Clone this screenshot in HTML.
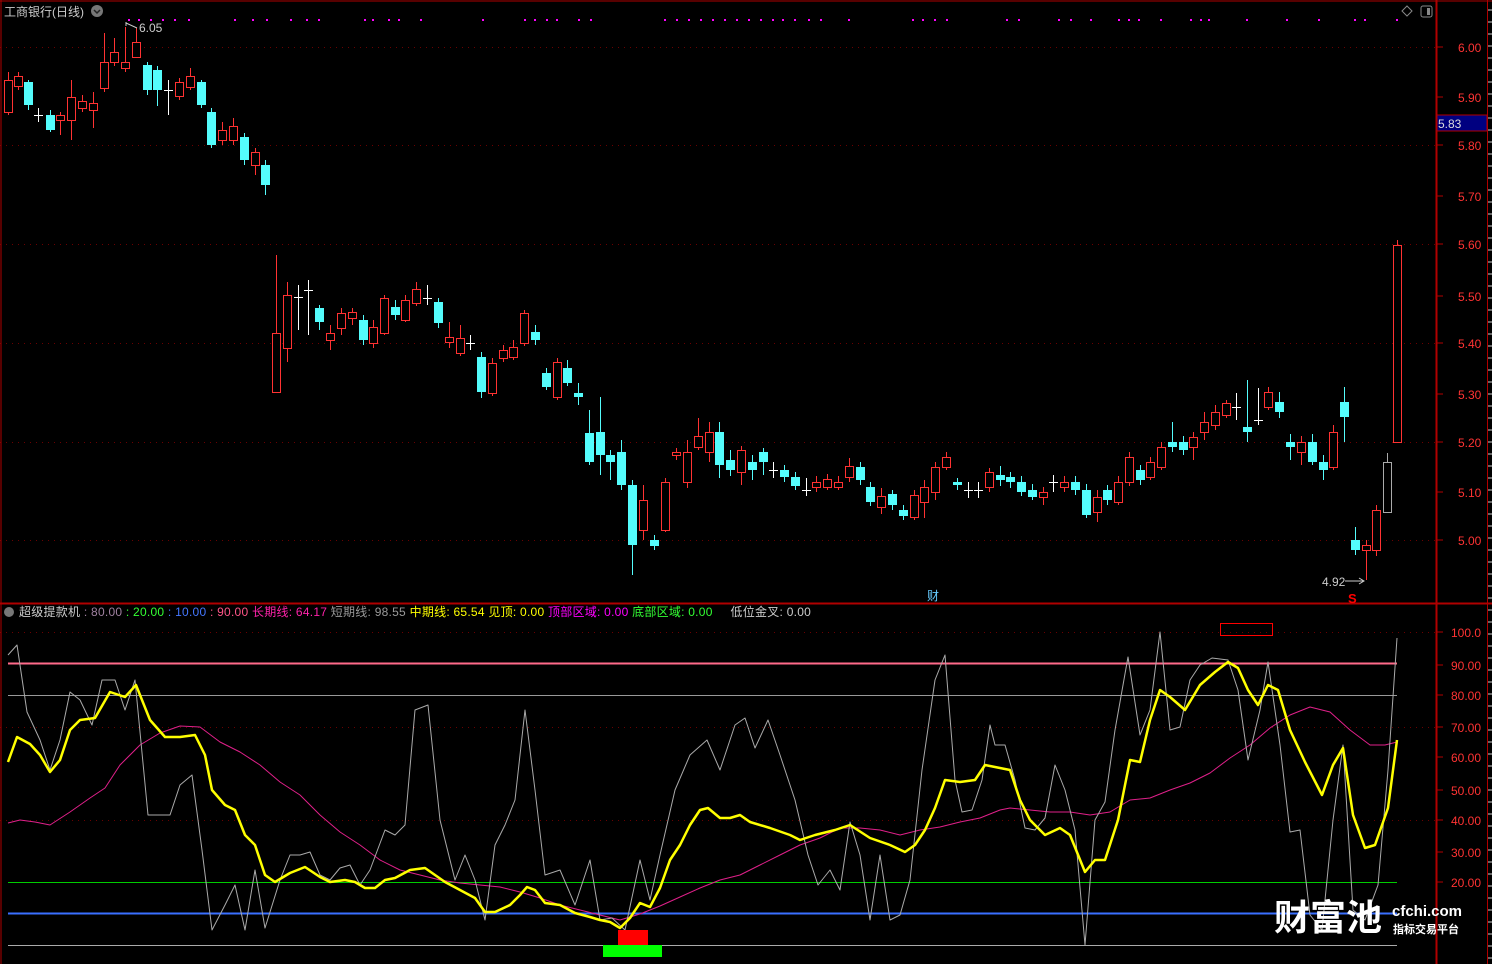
<!DOCTYPE html><html><head><meta charset="utf-8"><style>
html,body{margin:0;padding:0;background:#000;width:1492px;height:964px;overflow:hidden}
svg{display:block}
text{font-family:"Liberation Sans","Noto Sans CJK SC",sans-serif}
</style></head><body>
<svg id="s" width="1492" height="964" xmlns="http://www.w3.org/2000/svg">
<rect width="1492" height="964" fill="#000"/>
<g id="grid"></g>
<g id="c"></g>
<g id="ind"></g>
<line x1="0" y1="603.5" x2="1492" y2="603.5" stroke="#b00000" stroke-width="2"/>
<line x1="1436.5" y1="0" x2="1436.5" y2="964" stroke="#b00000" stroke-width="2"/>
<line x1="1487.5" y1="0" x2="1487.5" y2="964" stroke="#b00000" stroke-width="1"/>
<line x1="1" y1="0" x2="1" y2="964" stroke="#b00000" stroke-width="1"/>
<line x1="0" y1="1" x2="1492" y2="1" stroke="#b00000" stroke-width="1"/>
<rect x="1437" y="115" width="50" height="16" fill="#000080" stroke="#b00000"/>
<text x="1438" y="128" font-size="12" fill="#ddd">5.83</text>
<text x="4" y="16" font-size="12" fill="#ccc">工商银行(日线)</text>
<circle cx="97" cy="11" r="6" fill="#777"/><path d="M94,10 L97,13 L100,10" stroke="#222" fill="none" stroke-width="1.5"/>
<path d="M1402,11 L1407,6 L1412,11 L1407,16Z" stroke="#888" fill="none"/>
<rect x="1421" y="6" width="11" height="11" rx="2" stroke="#888" fill="none"/><rect x="1427" y="8" width="3" height="7" fill="#888"/>
<text x="139" y="32" font-size="12" fill="#ccc">6.05</text>
<path d="M126,22 L126,26 M126,23 L137,28" stroke="#ccc" fill="none"/>
<text x="1322" y="586" font-size="12" fill="#ccc">4.92</text>
<path d="M1345,581 L1364,581 M1359,578 L1364,581 L1359,584" stroke="#ccc" fill="none"/>
<text x="927" y="600" font-size="12" fill="#6cf">财</text>
<text x="1348" y="603" font-size="13" font-weight="bold" fill="#f00">S</text>
<circle cx="9" cy="612" r="5" fill="#777"/>
<text x="19" y="616" font-size="12" letter-spacing="0.25" xml:space="preserve"><tspan fill="#ccc">超级提款机</tspan><tspan fill="#a080a0"> : 80.00 </tspan><tspan fill="#3f3">: 20.00 </tspan><tspan fill="#47f">: 10.00 </tspan><tspan fill="#f58">: 90.00 </tspan><tspan fill="#f2a">长期线: 64.17 </tspan><tspan fill="#999">短期线: 98.55 </tspan><tspan fill="#ff0">中期线: 65.54 </tspan><tspan fill="#ff0">见顶: 0.00 </tspan><tspan fill="#f0f">顶部区域: 0.00 </tspan><tspan fill="#3f3">底部区域: 0.00 </tspan><tspan fill="#ccc">    低位金叉: 0.00</tspan></text>
<rect x="1220.5" y="623.5" width="52" height="12" fill="none" stroke="#f00"/>
<rect x="618" y="930" width="30" height="15" fill="#f00"/>
<rect x="603" y="945" width="59" height="12" fill="#0f0"/>
<text x="1274" y="930" font-size="36" font-weight="bold" fill="#fff" font-family="Noto Sans CJK SC,sans-serif">财富池</text>
<text x="1392" y="916" font-size="15" font-weight="bold" fill="#fff">cfchi.com</text>
<text x="1393" y="933" font-size="11" font-weight="bold" fill="#fff" font-family="Noto Sans CJK SC,sans-serif">指标交易平台</text>
</svg>
<script>
var NS="http://www.w3.org/2000/svg";
function el(p,t,a,txt){var e=document.createElementNS(NS,t);for(var k in a)e.setAttribute(k,a[k]);if(txt)e.textContent=txt;document.getElementById(p).appendChild(e);return e;}
var pl=[[6.00,47],[5.90,97],[5.80,145],[5.70,196],[5.60,244],[5.50,296],[5.40,343],[5.30,394],[5.20,442],[5.10,492],[5.00,540]];
pl.forEach(function(p,i){ if(i%2==0)el("grid","line",{x1:0,x2:1436,y1:p[1]+.5,y2:p[1]+.5,stroke:"#6a0000","stroke-dasharray":"1 5"});
 el("grid","line",{x1:1437,x2:1443,y1:p[1],y2:p[1],stroke:"#b00000"});
 el("grid","text",{x:1458,y:p[1]+5,"font-size":12,fill:"#f33"},p[0].toFixed(2));});
var il=[["100.0",632],["90.00",665],["80.00",695],["70.00",727],["60.00",757],["50.00",790],["40.00",820],["30.00",852],["20.00",882]];
il.forEach(function(p){el("grid","line",{x1:1437,x2:1443,y1:p[1],y2:p[1],stroke:"#b00000"});
 el("grid","text",{x:1451,y:p[1]+5,"font-size":12,fill:"#f33"},p[0]);});
[632,727,820].forEach(function(y){el("grid","line",{x1:0,x2:1436,y1:y+.5,y2:y+.5,stroke:"#6a0000","stroke-dasharray":"1 5"});});
for(var y=10;y<964;y+=12)el("grid","line",{x1:1487,x2:1492,y1:y,y2:y,stroke:"#ccc"});
[128,138,150,162,174,188,234,252,266,290,306,318,364,372,388,398,420,482,524,534,546,556,578,590,664,676,688,700,712,724,736,748,760,772,782,794,808,820,848,912,922,934,946,1006,1018,1058,1070,1090,1118,1128,1138,1160,1190,1200,1208,1246,1286,1318,1354,1364,1396].forEach(function(x){el("grid","rect",{x:x,y:19,width:2,height:2,fill:"#f0f"});});
var C=[[8,80,112,'r',72,115],[18,76,86,'r',72,90],[28,82,105,'c',80,110],[38,115,116,'w',108,122],[50,115,130,'c',110,132],[60,115,120,'r',112,135],[71,97,120,'r',80,140],[82,101,108,'r',95,112],[93,103,110,'r',92,128],[104,62,88,'r',33,92],[114,52,62,'r',38,66],[125,62,68,'r',27,72],[136,42,57,'r',28,58],[147,65,90,'c',62,95],[157,70,90,'c',66,106],[168,90,91,'w',80,115],[179,82,96,'r',78,100],[190,76,87,'r',68,90],[201,82,105,'c',80,108],[211,112,145,'c',108,148],[222,130,140,'r',122,145],[233,126,140,'r',118,145],[244,137,160,'c',133,165],[255,152,165,'r',148,175],[265,165,185,'c',160,195],
[276,333,392,'r',255,392],[287,295,348,'r',282,362],[298,297,298,'w',285,330],[308,290,291,'w',280,335],[319,308,322,'c',305,330],[330,333,340,'r',325,350],[341,313,328,'r',308,335],[352,312,318,'r',308,325],[363,320,340,'c',315,345],[373,327,343,'r',320,348],[384,298,333,'r',295,335],[395,307,315,'c',300,320],[405,300,320,'r',295,322],[416,289,303,'r',282,306],[427,298,299,'w',285,305],[438,302,323,'c',298,328],[449,337,342,'r',322,348],[460,338,353,'r',325,356],[470,343,344,'w',335,350],[481,357,392,'c',352,398],[492,363,393,'r',358,396],[503,350,358,'r',345,362],[513,347,357,'r',340,360],[524,313,343,'r',310,346],[535,332,340,'c',325,345],[546,373,387,'c',368,390],[557,362,397,'r',358,400],[567,368,383,'c',360,386],[578,393,397,'c',383,405],[589,433,462,'c',410,465],[600,432,455,'c',397,475],[610,455,462,'c',450,480],[621,452,485,'c',440,490],[632,485,545,'c',480,575],[643,500,530,'r',485,540],[654,540,546,'c',535,550],[665,482,530,'r',478,532],[676,452,455,'r',448,460],[687,452,482,'r',440,488],[698,436,447,'r',418,450],[709,432,452,'r',422,462],[719,432,465,'c',422,478],[730,460,470,'c',450,476],[741,450,472,'r',446,485],[752,462,470,'c',455,480],[763,452,462,'c',448,475],[773,470,471,'w',462,478],[784,470,477,'c',465,482],[795,477,486,'c',472,490],[806,490,491,'w',478,496],[816,482,487,'r',476,492],[827,479,487,'r',474,490],[838,482,487,'r',476,490],[849,466,477,'r',458,482],[860,467,480,'c',462,485],[870,487,502,'c',482,506],[881,496,507,'r',488,514],[892,494,505,'c',490,510],[903,510,516,'c',505,520],[914,495,517,'r',490,520],[924,487,502,'r',480,518],[935,467,492,'r',462,500],[946,457,467,'r',452,470],[957,482,485,'c',478,490],[968,490,491,'w',482,498],[978,490,491,'w',482,498],[989,472,487,'r',468,492],[1000,475,480,'c',466,486],[1010,477,482,'c',472,488],[1021,482,492,'c',476,496],[1032,490,497,'c',484,500],[1043,492,497,'r',487,505],[1053,482,483,'w',475,492],[1064,482,487,'r',476,492],[1075,482,490,'c',476,495],[1086,490,515,'c',484,518],[1097,497,512,'r',490,522],[1107,490,500,'c',485,505],[1118,482,502,'r',476,505],[1129,457,482,'r',452,486],[1140,470,480,'c',465,485],[1150,462,477,'r',457,480],[1161,447,467,'r',442,470],[1172,442,447,'c',422,452],[1183,442,450,'c',436,455],[1193,437,447,'r',432,460],[1204,422,432,'r',412,440],[1215,412,425,'r',405,430],[1226,403,415,'r',400,418],[1236,407,408,'w',393,420],[1247,427,432,'c',380,442],[1258,420,421,'w',388,425],[1268,392,407,'r',387,410],[1279,402,412,'c',392,418],[1290,442,447,'c',434,460],[1301,442,452,'r',436,465],[1312,442,462,'c',434,465],[1323,462,470,'c',455,480],[1333,432,467,'r',425,470],[1344,402,417,'c',387,442],
[1355,540,550,'c',527,555],[1366,545,550,'r',540,580],[1376,510,550,'r',505,556],[1387,462,512,'g',453,512],[1397,245,442,'r',240,442]];
C.forEach(function(k){var x=k[0],col={r:"#ff3232",c:"#54fcfc",w:"#fff",g:"#aaa"}[k[3]];
 el("c","line",{x1:x+.5,x2:x+.5,y1:k[4],y2:k[5],stroke:col});
 if(k[3]=='w'){el("c","line",{x1:x-4,x2:x+5,y1:k[1]+.5,y2:k[1]+.5,stroke:col});return;}
 if(k[3]=='c')el("c","rect",{x:x-4,y:k[1],width:9,height:Math.max(1,k[2]-k[1]),fill:col});
 else el("c","rect",{x:x-3.5,y:k[1]+.5,width:8,height:Math.max(1,k[2]-k[1]),fill:"#000",stroke:col});});
[[663,"#ff6a8a"],[695,"#999"],[882,"#0c0"],[913,"#3a6fff"],[945,"#aaa"]].forEach(function(l){el("ind","line",{x1:8,x2:1397,y1:l[0]+.5,y2:l[0]+.5,stroke:l[1],"stroke-width":l[0]==663||l[0]==913?2:1});});
function pl2(pts,col,w){el("ind","polyline",{points:pts,fill:"none",stroke:col,"stroke-width":w,"stroke-linejoin":"round"});}
pl2("8,823 20,820 35,822 50,825 70,812 90,798 105,788 120,765 140,745 160,733 180,726 200,727 220,742 240,752 260,765 280,782 300,795 320,815 340,832 360,845 380,860 400,870 420,875 440,880 460,883 480,885 500,887 520,892 540,898 560,905 580,910 600,915 620,920 640,914 660,906 680,897 700,888 720,880 740,875 760,865 780,855 800,845 820,838 840,828 860,828 880,830 900,835 920,830 940,827 960,822 980,818 1000,810 1010,808 1030,810 1050,812 1070,812 1090,815 1110,812 1130,800 1150,798 1170,790 1190,783 1210,773 1230,758 1250,745 1270,728 1290,715 1310,707 1330,712 1350,730 1370,745 1385,745 1397,742","#e0208a",1);
pl2("8,655 17,645 27,712 40,740 50,770 60,740 70,692 80,700 92,725 102,680 115,680 125,710 135,680 148,815 160,815 170,815 180,785 192,775 202,850 212,930 225,905 235,885 245,930 255,870 265,928 280,880 290,855 300,855 310,852 320,875 330,880 340,868 350,865 360,885 370,870 385,830 395,835 405,825 415,710 428,705 440,820 455,880 465,855 475,880 485,920 495,845 505,825 515,800 525,710 535,790 545,875 560,870 575,905 590,860 600,920 612,918 625,930 640,860 650,900 660,855 675,790 690,755 707,740 720,770 735,725 745,718 755,748 768,720 780,755 795,800 808,855 818,885 830,870 840,890 850,822 860,855 870,920 880,855 890,920 900,915 910,880 922,770 935,680 945,655 955,780 962,812 972,810 982,780 990,725 995,745 1005,745 1015,780 1025,828 1035,830 1045,818 1055,765 1065,790 1075,830 1085,945 1095,820 1105,802 1115,730 1128,657 1140,735 1150,710 1160,632 1170,730 1180,727 1190,680 1200,665 1212,658 1228,660 1238,690 1248,760 1260,710 1268,662 1280,745 1290,832 1300,830 1310,915 1322,930 1333,820 1343,745 1353,910 1365,920 1378,885 1388,770 1397,638","#aaa",1);
pl2("8,762 17,737 30,744 40,755 50,772 60,760 70,730 80,720 95,718 110,692 125,697 136,685 150,720 165,737 180,737 195,735 205,755 212,790 225,805 235,810 245,835 255,845 265,875 275,882 290,873 305,867 320,877 330,882 345,880 355,882 365,888 375,888 385,880 395,878 410,870 425,868 435,875 445,882 460,890 475,898 485,912 495,912 510,905 520,895 527,887 535,890 545,903 560,905 575,913 590,917 600,920 610,922 620,928 630,918 640,903 650,907 660,888 670,860 680,845 690,825 700,810 708,808 720,818 730,818 740,815 750,822 770,828 790,835 800,840 815,835 835,830 850,825 870,838 890,845 905,852 915,845 925,830 935,808 945,780 960,782 975,780 985,765 1000,768 1010,770 1020,800 1030,820 1045,835 1060,828 1070,835 1085,872 1095,860 1105,860 1118,820 1130,760 1140,762 1150,720 1160,690 1170,697 1185,710 1200,685 1215,672 1228,662 1238,668 1248,690 1258,705 1268,685 1278,690 1290,730 1305,762 1322,795 1333,765 1343,748 1353,815 1365,848 1375,845 1388,808 1397,740","#ffff00",2.5);
</script>
</body></html>
